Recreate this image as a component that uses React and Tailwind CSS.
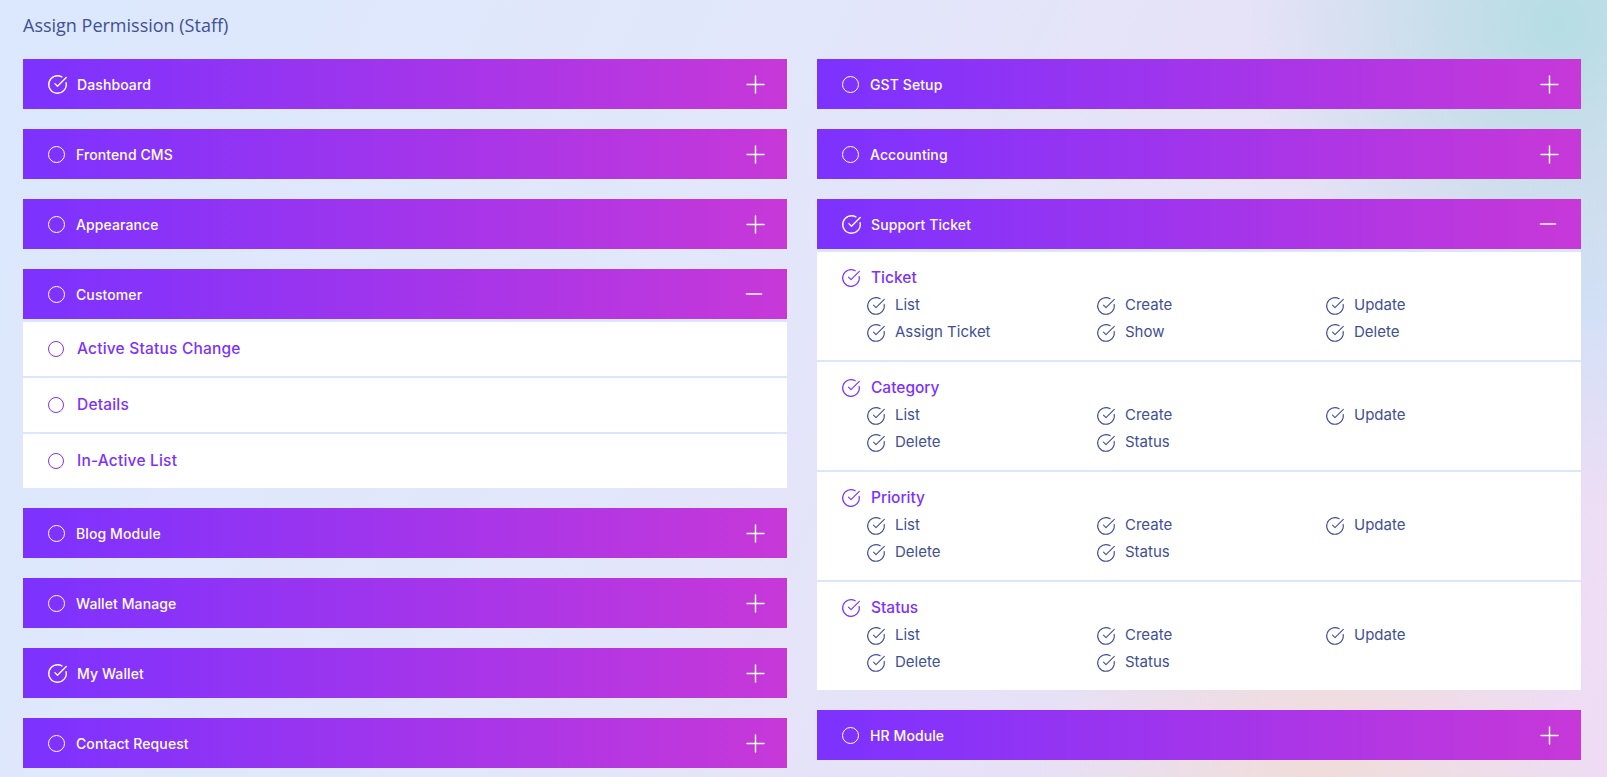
import React from 'react';
import { CircleCheckBig, Plus, Minus } from 'lucide-react';

const leftModules = [
  { name: 'Dashboard', checked: true },
  { name: 'Frontend CMS' },
  { name: 'Appearance' },
  {
    name: 'Customer',
    open: true,
    items: ['Active Status Change', 'Details', 'In-Active List'],
  },
  { name: 'Blog Module' },
  { name: 'Wallet Manage' },
  { name: 'My Wallet', checked: true },
  { name: 'Contact Request' },
];

const rightModules = [
  { name: 'GST Setup' },
  { name: 'Accounting' },
  {
    name: 'Support Ticket',
    checked: true,
    open: true,
    groups: [
      { title: 'Ticket', items: ['List', 'Create', 'Update', 'Assign Ticket', 'Show', 'Delete'] },
      { title: 'Category', items: ['List', 'Create', 'Update', 'Delete', 'Status'] },
      { title: 'Priority', items: ['List', 'Create', 'Update', 'Delete', 'Status'] },
      { title: 'Status', items: ['List', 'Create', 'Update', 'Delete', 'Status'] },
    ],
  },
  { name: 'HR Module' },
];

const Circle = ({ className }) => (
  <span className={`block rounded-full border-[1.5px] ${className}`} />
);

const ModuleCard = ({ module }) => (
  <div className="flex flex-col">
    {/* Header bar */}
    <div className="h-[50px] flex items-center pl-[25px] pr-[17px] bg-[linear-gradient(90deg,#7c32ff_0%,#c738d8_100%)]">
      {module.checked ? (
        <CircleCheckBig size={21} strokeWidth={1.6} className="text-white shrink-0 -ml-[1px]" />
      ) : (
        <Circle className="w-[17px] h-[17px] border-white shrink-0" />
      )}
      <span className={`${module.checked ? 'ml-[9px]' : 'ml-[11px]'} text-[14px] font-medium text-white tracking-[0.1px]`}>
        {module.name}
      </span>
      <span className="ml-auto text-white">
        {module.open ? (
          <Minus size={26} strokeWidth={1.3} className="mr-[3px]" />
        ) : (
          <Plus size={29} strokeWidth={1.2} />
        )}
      </span>
    </div>

    {/* Simple item list */}
    {module.open && module.items && (
      <div className="flex flex-col gap-[2px] pt-[3px] bg-[#dce6fb]">
        {module.items.map((item) => (
          <div key={item} className="h-[54px] bg-white flex items-center pl-[25px]">
            <Circle className="w-[16px] h-[16px] border-[#7c32ff]" />
            <span className="ml-[13px] text-[15.5px] font-medium tracking-[0.2px] text-[#7c32ff]">{item}</span>
          </div>
        ))}
      </div>
    )}

    {/* Grouped permissions */}
    {module.open && module.groups && (
      <div className="flex flex-col gap-[2px] pt-[3px] bg-[#dce6fb]">
        {module.groups.map((group) => (
          <div key={group.title} className="bg-white pt-[14px] pb-[14px] pl-[24px]">
            <div className="h-[26px] flex items-start">
              <CircleCheckBig size={20} strokeWidth={1.4} className="text-[#7c32ff] mt-[2px]" />
              <span className="ml-[10px] leading-[24px] text-[15.5px] font-medium text-[#7c32ff]">{group.title}</span>
            </div>
            <div className="grid grid-cols-[230px_229px_1fr] pl-[25px]">
              {group.items.map((item, i) => (
                <div key={i} className="h-[27px] flex items-center">
                  <CircleCheckBig size={20} strokeWidth={1.3} className="text-[#415094]" />
                  <span className="ml-[9px] text-[15px] text-[#415094]">{item}</span>
                </div>
              ))}
            </div>
          </div>
        ))}
      </div>
    )}
  </div>
);

const App = () => {
  return (
    <div className="min-h-screen font-['Inter','Noto_Sans',sans-serif] bg-[radial-gradient(circle_at_97%_3%,#b5dde4_0,rgba(181,221,228,0)_18%),radial-gradient(circle_at_99%_40%,#d3e0f7_0,rgba(211,224,247,0)_12%),radial-gradient(circle_at_82%_100%,#f0dcd9_0,rgba(240,220,217,0)_18%),linear-gradient(115deg,#dbe8fd_0%,#e2e7fb_40%,#e8e0f6_75%,#efdcf4_100%)]">
      <div className="pl-[23px] pr-[26px] pt-[14px] pb-[9px]">
        <h1 className="h-[22px] leading-[22px] mb-[23px] text-[18px] text-[#415094] font-['Open_Sans','Noto_Sans',sans-serif]">
          Assign Permission (Staff)
        </h1>

        <div className="grid grid-cols-2 gap-x-[30px] items-start">
          <div className="flex flex-col gap-5">
            {leftModules.map((m) => (
              <ModuleCard key={m.name} module={m} />
            ))}
          </div>
          <div className="flex flex-col gap-5">
            {rightModules.map((m) => (
              <ModuleCard key={m.name} module={m} />
            ))}
          </div>
        </div>
      </div>
    </div>
  );
};

export default App;
